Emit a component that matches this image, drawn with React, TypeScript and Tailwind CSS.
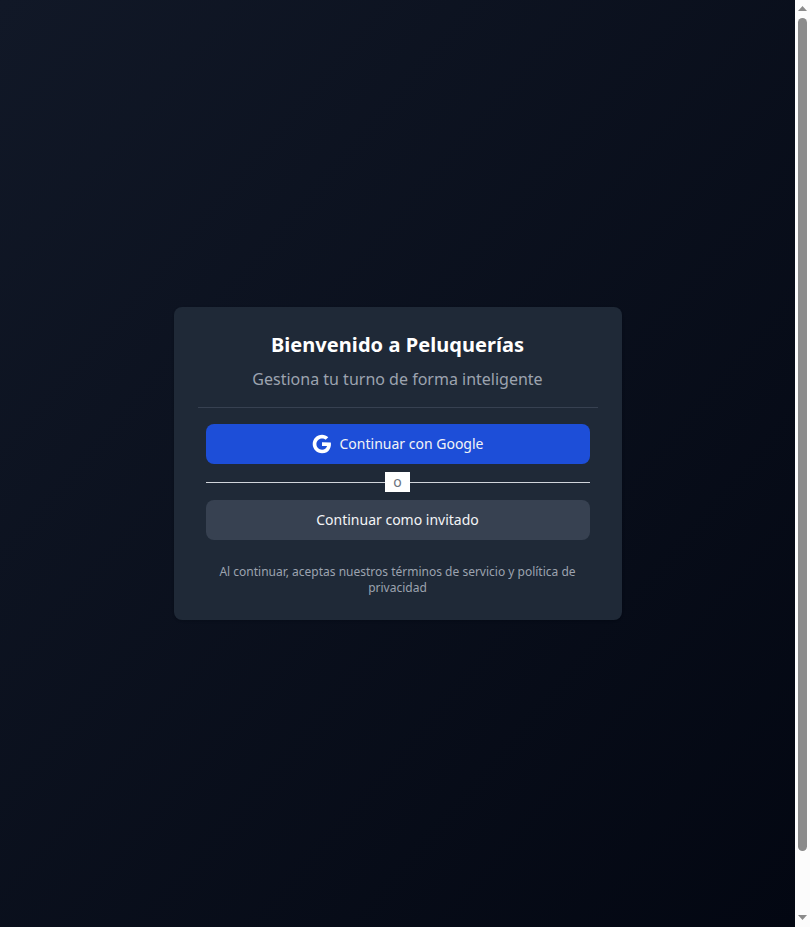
function GoogleIcon() {
  return (
    <svg viewBox="1.79 1.25 21.48 21.48" className="h-5 w-5" fill="currentColor" aria-hidden="true">
      <path d="M12.545,10.239v3.821h5.445c-0.712,2.315-2.647,3.972-5.445,3.972c-3.332,0-6.033-2.701-6.033-6.032s2.701-6.032,6.033-6.032c1.498,0,2.866,0.549,3.921,1.453l2.814-2.814C17.503,2.988,15.139,2,12.545,2C7.021,2,2.543,6.477,2.543,12s4.478,10,10.002,10c8.396,0,10.249-7.85,9.426-11.748L12.545,10.239z" />
    </svg>
  );
}

function Scrollbar() {
  return (
    <div className="flex w-[15px] shrink-0 flex-col items-center bg-[#fcfcfc] text-[#8b8b8b]" aria-hidden="true">
      <svg className="h-[18px] w-[15px] shrink-0" viewBox="0 0 15 18" fill="currentColor">
        <path d="M7.5 6 L12 11 H3 Z" />
      </svg>
      <div className="h-[833px] w-[9px] rounded-full bg-[#8b8b8b]" />
      <svg className="mt-auto h-[18px] w-[15px] shrink-0" viewBox="0 0 15 18" fill="currentColor">
        <path d="M7.5 11 L12 6 H3 Z" />
      </svg>
    </div>
  );
}

export default function App() {
  return (
    <div className="flex h-screen overflow-hidden font-['Noto_Sans',sans-serif]">
      <main className="flex flex-1 items-center justify-center bg-[linear-gradient(to_bottom_right,#111827,#030712)]">
        <section className="w-[448px] rounded-lg bg-[#1f2937] p-6 text-center shadow-sm">
          <header className="border-b border-[#374151] pb-4">
            <h1 className="text-xl font-bold tracking-[0.05px] text-white">Bienvenido a Peluquerías</h1>
            <p className="mt-2 text-base text-[#9ca3af]">Gestiona tu turno de forma inteligente</p>
          </header>
          <div className="px-2 pt-4">
            <button className="flex h-10 w-full items-center justify-center gap-2 rounded-lg bg-[#1d4ed8] text-sm text-white">
              <GoogleIcon />
              <span className="text-[#f3f4f6]">Continuar con Google</span>
            </button>
            <div className="my-2 flex h-5 items-center">
              <span className="h-px flex-1 bg-[#d1d5db]" />
              <span className="bg-white px-2 text-sm text-[#6b7280]">o</span>
              <span className="h-px flex-1 bg-[#d1d5db]" />
            </div>
            <button className="h-10 w-full rounded-lg bg-[#374151] text-sm text-[#f3f4f6]">
              Continuar como invitado
            </button>
            <p className="mt-6 text-xs text-[#9ca3af]">
              Al continuar, aceptas nuestros términos de servicio y política de privacidad
            </p>
          </div>
        </section>
      </main>
      <Scrollbar />
    </div>
  );
}
